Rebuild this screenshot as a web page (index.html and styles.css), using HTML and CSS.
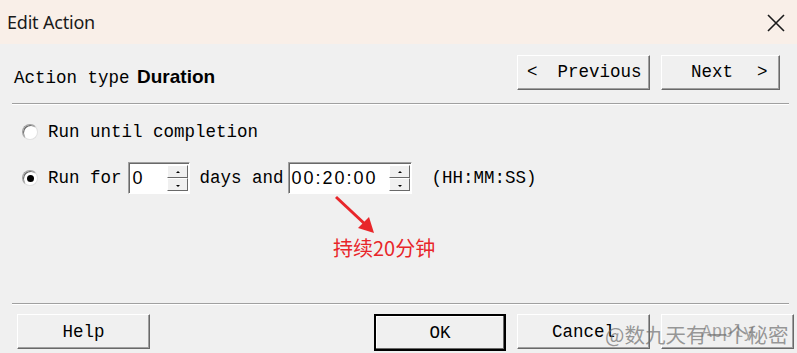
FILE: index.html
```html
<!DOCTYPE html>
<html>
<head>
    <meta charset="UTF-8">
    <title>Edit Action</title>
    <link rel="stylesheet" href="styles.css">
</head>
<body>
    <div class="dialog">
        <div class="titlebar">
            <span class="title">Edit Action</span>
            <svg class="close" width="18" height="18" viewBox="0 0 18 18">
                <path d="M1 1 L17 17 M17 1 L1 17" stroke="#1a1a1a" stroke-width="1.6" fill="none"/>
            </svg>
        </div>

        <div class="content">
            <div class="header">
                <div class="action-type">Action type <b>Duration</b></div>
                <div class="nav">
                    <button class="btn btn-prev"><span>&lt;</span><span>Previous</span></button>
                    <button class="btn btn-next"><span>Next</span><span>&gt;</span></button>
                </div>
            </div>
            <div class="sep"></div>

            <div class="options">
                <div class="row row-first">
                    <span class="radio"></span>
                    <span class="label">Run until completion</span>
                </div>
                <div class="row row-second">
                    <span class="radio checked"></span>
                    <span class="label">Run for</span>
                    <div class="spin spin-days">
                        <span class="spin-value">0</span>
                        <div class="spin-arrows">
                            <span class="arrow-up"></span>
                            <span class="arrow-down"></span>
                        </div>
                    </div>
                    <span class="label days">days and</span>
                    <div class="spin spin-time">
                        <span class="spin-value">00:20:00</span>
                        <div class="spin-arrows">
                            <span class="arrow-up"></span>
                            <span class="arrow-down"></span>
                        </div>
                    </div>
                    <span class="label hint">(HH:MM:SS)</span>
                </div>
                <div class="note">持续20分钟</div>

                <svg class="pointer" width="50" height="50" viewBox="0 0 50 50">
                    <path d="M2 2 L33 31" stroke="#e8262a" stroke-width="3" fill="none"/>
                    <path d="M40 38 L24 33 L35 22 Z" fill="#e8262a"/>
                </svg>
            </div>
            <div class="sep"></div>

            <div class="footer">
                <button class="btn">Help</button>
                <div class="footer-right">
                    <button class="btn btn-default">OK</button>
                    <button class="btn">Cancel</button>
                    <button class="btn btn-disabled">Apply</button>
                </div>
            </div>
        </div>

        <div class="watermark">@数九天有一个秘密</div>
    </div>
</body>
</html>
```

FILE: styles.css
```css
body {
    margin: 0;
    background-color: #f0f0f0;
    font-family: "Liberation Mono", monospace;
    color: #000;
}
.dialog {
    position: relative;
    width: 797px;
    height: 353px;
    overflow: hidden;
    background-color: #f0f0f0;
}
.titlebar {
    height: 44px;
    background-color: #f9efe8;
    display: flex;
    align-items: center;
    justify-content: space-between;
    padding: 0 12px 0 7px;
}
.title {
    font-family: "Noto Sans", "Open Sans", sans-serif;
    font-size: 18px;
    color: #1a1a1a;
    letter-spacing: -0.2px;
}
.close {
    margin-top: 2px;
}
.content {
    padding: 0 5px 0 12px;
}
.header {
    height: 59px;
    display: flex;
    align-items: center;
    justify-content: space-between;
}
.action-type {
    font-size: 17.5px;
    padding-left: 2px;
    margin-top: 6px;
}
.action-type b {
    font-family: "Liberation Sans", Arial, sans-serif;
    font-size: 19px;
    margin-left: -3px;
}
.nav {
    display: flex;
    gap: 11px;
    margin-right: 12px;
    margin-top: -3px;
}
.btn {
    font-family: "Liberation Mono", monospace;
    font-size: 17.5px;
    color: #000;
    height: 35px;
    width: 133px;
    background-color: #f0f0f0;
    border: 1px solid;
    border-color: #fff #696969 #696969 #fff;
    box-shadow: inset -1px -1px 0 #a0a0a0;
    padding: 0;
    display: flex;
    align-items: center;
    justify-content: center;
}
.btn-prev {
    justify-content: flex-start;
    gap: 20px;
    padding-left: 9px;
}
.btn-next {
    width: 119px;
    justify-content: flex-start;
    gap: 24px;
    padding-left: 29px;
}
.sep {
    height: 1px;
    background-color: #a0a0a0;
    border-bottom: 1px solid #fff;
    margin-right: 3px;
}
.options {
    position: relative;
    height: 198px;
    padding-top: 12px;
    box-sizing: border-box;
}
.row {
    display: flex;
    align-items: center;
    padding-left: 10px;
}
.row-first {
    height: 30px;
}
.row-second {
    height: 32px;
    margin-top: 15px;
}
.radio {
    width: 14px;
    height: 14px;
    border-radius: 50%;
    background-color: #fff;
    border: 1px solid #a0a0a0;
    border-bottom-color: #e0e0e0;
    border-right-color: #e0e0e0;
    box-shadow: inset 1px 1px 0 #696969;
    margin-right: 10px;
    display: flex;
    align-items: center;
    justify-content: center;
}
.radio.checked::after {
    content: "";
    width: 7px;
    height: 7px;
    border-radius: 50%;
    background-color: #000;
}
.label {
    font-size: 17.5px;
    white-space: pre;
}
.spin {
    height: 32px;
    box-sizing: border-box;
    border: 1px solid;
    border-color: #a0a0a0 #fff #fff #a0a0a0;
    box-shadow: inset 1px 1px 0 #696969;
    background-color: #fff;
    display: flex;
    align-items: stretch;
    margin-left: 6px;
}
.spin-days {
    width: 62px;
}
.spin-time {
    width: 124px;
    margin-left: 4px;
}
.spin-value {
    flex: 1;
    font-family: "Liberation Sans", Arial, sans-serif;
    font-size: 18px;
    padding: 3px 0 0 4px;
    line-height: 24px;
}
.spin-time .spin-value {
    letter-spacing: 2px;
    padding-left: 3px;
}
.spin-arrows {
    width: 21px;
    display: flex;
    flex-direction: column;
    padding: 2px 1px 2px 0;
}
.arrow-up, .arrow-down {
    flex: 1;
    background-color: #f0f0f0;
    border: 1px solid;
    border-color: #fff #696969 #696969 #fff;
    position: relative;
}
.arrow-up::after, .arrow-down::after {
    content: "";
    position: absolute;
    left: 8px;
    top: 5px;
    border-left: 2px solid transparent;
    border-right: 2px solid transparent;
}
.arrow-up::after {
    border-bottom: 2px solid #000;
}
.arrow-down::after {
    top: 6px;
    border-top: 2px solid #000;
}
.days {
    margin-left: 10px;
}
.hint {
    margin-left: 20px;
}
.note {
    font-family: "Noto Sans CJK SC", sans-serif;
    font-size: 20px;
    color: #e8262a;
    margin: 40px 0 0 321px;
    line-height: 28px;
}
.pointer {
    position: absolute;
    left: 322px;
    top: 90px;
}
.footer {
    display: flex;
    justify-content: space-between;
    align-items: flex-start;
    padding: 9px 0 0 5px;
}
.footer-right {
    display: flex;
    align-items: flex-start;
    gap: 11px;
    margin-right: -2px;
}
.btn-default {
    width: 132px;
    height: 37px;
    border: 2px solid #000;
    box-shadow: inset -1px -1px 0 #696969, inset 1px 1px 0 #fff;
}
.btn-disabled {
    color: #a0a0a0;
}
.watermark {
    position: absolute;
    left: 605px;
    top: 319px;
    font-family: "Noto Sans CJK SC", sans-serif;
    font-size: 20.5px;
    color: rgba(110, 110, 110, 0.7);
    white-space: nowrap;
}
```
